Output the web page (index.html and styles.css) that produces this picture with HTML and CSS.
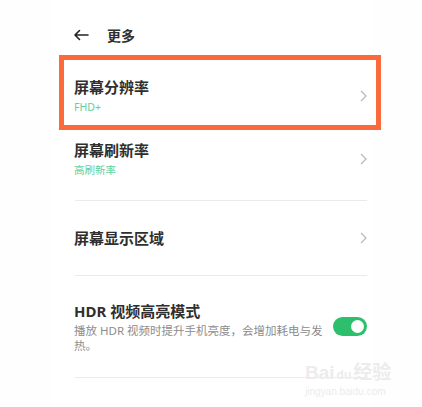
FILE: index.html
```html
<!DOCTYPE html>
<html lang="zh-CN">
<head>
    <meta charset="UTF-8">
    <meta name="viewport" content="width=device-width, initial-scale=1.0">
    <title>更多</title>
    <link rel="stylesheet" href="styles.css">
</head>
<body>
    <div class="screen">
        <div class="header">
            <svg class="back" width="16" height="12" viewBox="0 0 16 12">
                <path d="M15 6H2M6.5 1.5L2 6l4.5 4.5" fill="none" stroke="#222" stroke-width="1.6" stroke-linecap="round" stroke-linejoin="round"/>
            </svg>
            <span class="title">更多</span>
        </div>

        <div class="row row-first">
            <div class="text">
                <div class="label">屏幕分辨率</div>
                <div class="sub">FHD+</div>
            </div>
            <svg class="chevron" width="7" height="12" viewBox="0 0 7 12"><path d="M1 1l5 5-5 5" fill="none" stroke="#b8b8b8" stroke-width="1.2"/></svg>
        </div>

        <div class="row row-second">
            <div class="text">
                <div class="label">屏幕刷新率</div>
                <div class="sub">高刷新率</div>
            </div>
            <svg class="chevron" width="7" height="12" viewBox="0 0 7 12"><path d="M1 1l5 5-5 5" fill="none" stroke="#b8b8b8" stroke-width="1.2"/></svg>
        </div>
        <div class="divider"></div>

        <div class="row row-single">
            <div class="text">
                <div class="label">屏幕显示区域</div>
            </div>
            <svg class="chevron" width="7" height="12" viewBox="0 0 7 12"><path d="M1 1l5 5-5 5" fill="none" stroke="#b8b8b8" stroke-width="1.2"/></svg>
        </div>
        <div class="divider"></div>

        <div class="row row-switch">
            <div class="text">
                <div class="label">HDR 视频高亮模式</div>
                <div class="desc">播放 HDR 视频时提升手机亮度，会增加耗电与发热。</div>
            </div>
            <div class="toggle"><span class="knob"></span></div>
        </div>
        <div class="divider"></div>
    </div>

    <!-- 标注框 -->
    <div class="highlight"></div>

    <!-- 水印 -->
    <div class="watermark">
        <div class="wm-logo">Bai<span class="wm-du">du</span>经验</div>
        <div class="wm-url">jingyan.baidu.com</div>
    </div>
</body>
</html>
```

FILE: styles.css
```css
:root {
    --text-color: #2f2f2f;
    --sub-color: #5fd0a2;
    --desc-color: #8c8c8c;
    --accent: #2dbf6c;
    --mark: #fb6a3b;
}

body {
    margin: 0;
    background: #fefefe;
    font-family: "Noto Sans", "Noto Sans CJK SC", sans-serif;
    color: var(--text-color);
}

.screen {
    margin-left: 50px;
    width: 323px;
    height: 407px;
    background: #ffffff;
    padding-left: 24px;
    padding-right: 6px;
    box-sizing: border-box;
}

.header {
    height: 70px;
    display: flex;
    align-items: center;
}

.back {
    margin-left: -1px;
}

.title {
    margin-left: 18px;
    font-size: 14px;
    font-weight: 700;
}

.row {
    display: flex;
    align-items: center;
    justify-content: space-between;
}

.row-first {
    padding: 7px 0;
}

.row-second {
    padding: 18px 0 22px;
}

.row-single {
    height: 74px;
}

.row-switch {
    height: 101px;
}

.label {
    font-size: 15px;
    line-height: 20px;
    font-weight: 700;
}

.sub {
    margin-top: 2px;
    font-size: 10.5px;
    line-height: 16px;
    color: var(--sub-color);
}

.desc {
    width: 250px;
    margin-top: 2px;
    font-size: 11.5px;
    line-height: 15px;
    color: var(--desc-color);
}

.divider {
    height: 1px;
    margin-left: 1px;
    background: #ebebeb;
}

.toggle {
    width: 34px;
    height: 19px;
    border-radius: 10px;
    background: var(--accent);
    display: flex;
    align-items: center;
    justify-content: flex-end;
    padding-right: 3px;
    box-sizing: border-box;
}

.knob {
    width: 13px;
    height: 13px;
    border-radius: 50%;
    background: #ffffff;
}

.highlight {
    position: absolute;
    left: 59px;
    top: 55px;
    width: 322px;
    height: 75px;
    border: 5px solid var(--mark);
    box-sizing: border-box;
}

.watermark {
    position: absolute;
    left: 305px;
    top: 362px;
    color: #ececec;
    font-family: "Liberation Sans", "Noto Sans CJK SC", sans-serif;
}

.wm-logo {
    font-size: 19px;
    line-height: 22px;
    font-weight: 700;
}

.wm-du {
    font-size: 12px;
    margin: 0 2px;
}

.wm-url {
    font-size: 10px;
    line-height: 12px;
}
```
